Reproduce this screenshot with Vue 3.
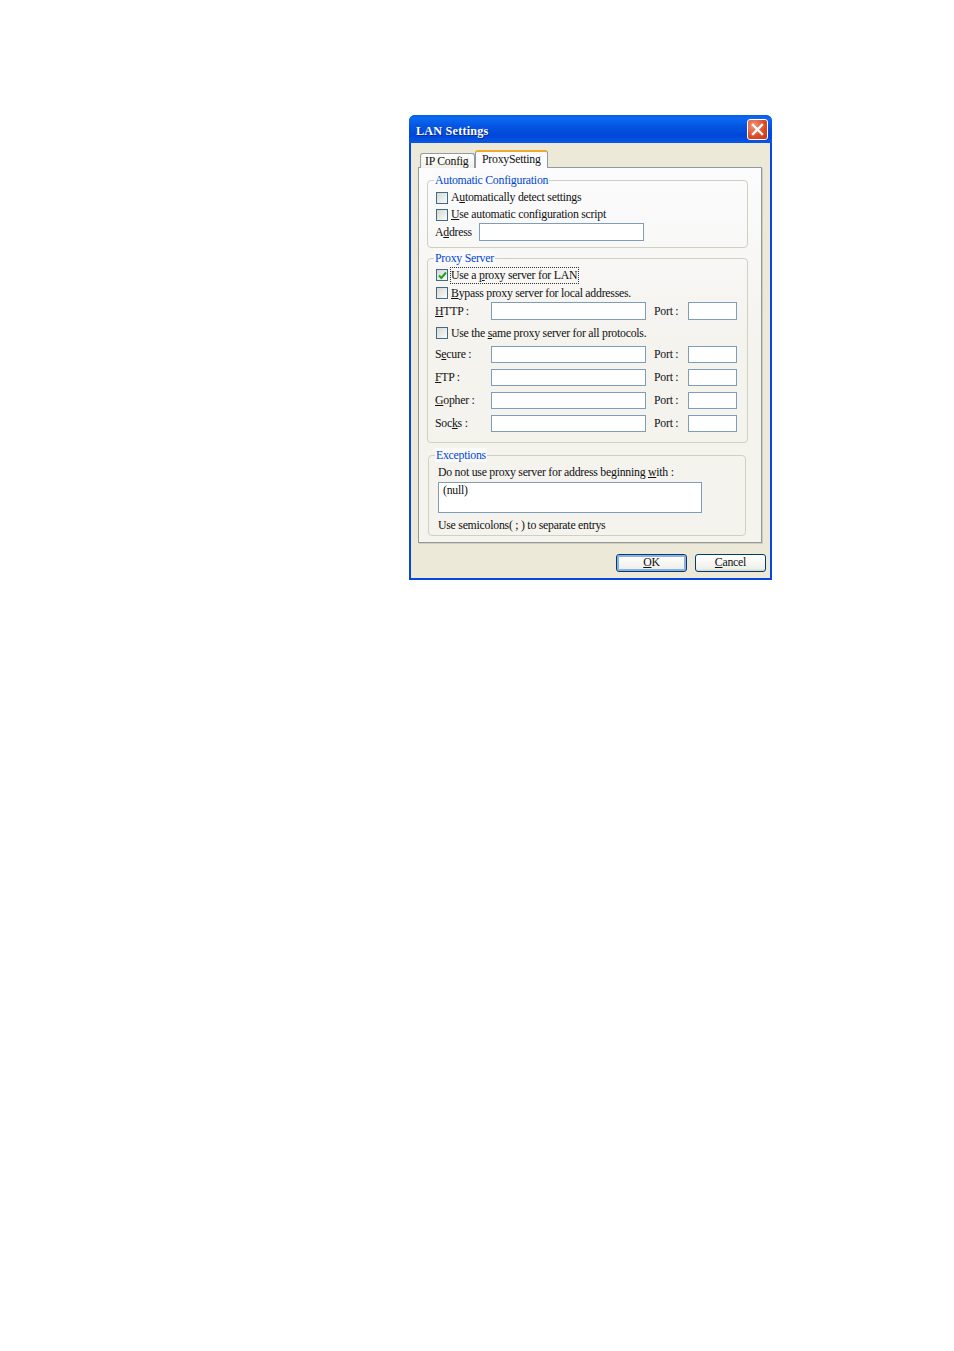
<template>
  <div class="page">
    <div class="window">
      <div class="titlebar">
        <span class="title">LAN Settings</span>
        <button class="close" type="button">
          <svg width="13" height="13" viewBox="0 0 13 13">
            <path d="M2 2 L11 11 M11 2 L2 11" stroke="#fff" stroke-width="2.4" stroke-linecap="square" />
          </svg>
        </button>
      </div>

      <div class="body">
        <div class="tabs">
          <div class="tab">IP Config</div>
          <div class="tab active">ProxySetting</div>
        </div>

        <div class="panel">
          <div class="group group-auto">
            <span class="legend">Automatic Configuration</span>
            <label class="row row-17"><i class="check"></i><span>A<u>u</u>tomatically detect settings</span></label>
            <label class="row row-17"><i class="check"></i><span><u>U</u>se automatic configuration script</span></label>
            <div class="row row-18 address">
              <span class="addr-label">A<u>d</u>dress</span>
              <span class="input addr-input"></span>
            </div>
          </div>

          <div class="group group-proxy">
            <span class="legend">Proxy Server</span>
            <label class="row row-18">
              <i class="check checked">
                <svg width="9" height="9" viewBox="0 0 9 9">
                  <path d="M1 4.5 L3.4 7 L8 1.5" fill="none" stroke="#21a121" stroke-width="2" />
                </svg>
              </i>
              <span class="focused">Use a <u>p</u>roxy server for LAN</span>
            </label>
            <label class="row row-18"><i class="check"></i><span><u>B</u>ypass proxy server for local addresses.</span></label>
            <div class="row server server-http">
              <span class="server-label"><u>H</u>TTP :</span>
              <span class="input host"></span>
              <span class="port-label">Port :</span>
              <span class="input port"></span>
            </div>
            <label class="row same"><i class="check"></i><span>Use the <u>s</u>ame proxy server for all protocols.</span></label>
            <div v-for="s in servers" :key="s.tail" class="row server">
              <span class="server-label">{{ s.head }}<u>{{ s.key }}</u>{{ s.tail }}</span>
              <span class="input host"></span>
              <span class="port-label">Port :</span>
              <span class="input port"></span>
            </div>
          </div>

          <div class="group group-exc">
            <span class="legend">Exceptions</span>
            <div class="exc-text">Do not use proxy server for address be<u>g</u>inning <u>w</u>ith :</div>
            <div class="input area">(null)</div>
            <div class="exc-note">Use semicolons( ; ) to separate entrys</div>
          </div>
        </div>

        <div class="buttons">
          <button class="btn default" type="button"><u>O</u>K</button>
          <button class="btn" type="button"><u>C</u>ancel</button>
        </div>
      </div>
    </div>
  </div>
</template>

<script setup>
const servers = [
  { head: 'S', key: 'e', tail: 'cure :' },
  { head: '', key: 'F', tail: 'TP :' },
  { head: '', key: 'G', tail: 'opher :' },
  { head: 'Soc', key: 'k', tail: 's :' }
]
</script>

<style>
html, body { background: #fff; }
</style>

<style scoped>
.page {
  height: 1351px;
  padding: 115px 0 0 409px;
  box-sizing: border-box;
  font-family: "Liberation Serif", "Times New Roman", serif;
  font-size: 11.8px;
  letter-spacing: -0.25px;
  color: #111;
}
.window {
  width: 363px;
  height: 465px;
  display: flex;
  flex-direction: column;
  background: #0a46dc;
  border-radius: 6px 6px 0 0;
  box-sizing: border-box;
  padding: 0 2px 2px;
}
.titlebar {
  height: 28px;
  margin: 0 -2px;
  padding: 0 4px 0 7px;
  display: flex;
  align-items: center;
  justify-content: space-between;
  border-radius: 6px 6px 0 0;
  background: linear-gradient(#0a5ce8 0%, #0a6af0 12%, #0554e2 40%, #0047d8 75%, #0a58e8 100%);
}
.title {
  color: #fff;
  font-weight: bold;
  font-size: 12.2px;
  letter-spacing: 0.2px;
  padding-top: 4px;
  text-shadow: 1px 1px 0 #0a2a90;
}
.close {
  width: 21px;
  height: 21px;
  padding: 0;
  display: flex;
  align-items: center;
  justify-content: center;
  background: radial-gradient(circle at 30% 30%, #f0937a, #db4a24 60%, #c23a14);
  border: 1px solid #fff;
  border-radius: 3px;
}
.body {
  flex: 1;
  background: #ece9d8;
  display: flex;
  flex-direction: column;
  padding: 0 7px;
}
.tabs {
  display: flex;
  align-items: flex-end;
  height: 25px;
  padding-left: 2px;
  position: relative;
  z-index: 1;
  margin-bottom: -1px;
}
.tab {
  height: 15px;
  width: 55px;
  box-sizing: border-box;
  padding: 0 0 0 4px;
  background: linear-gradient(#fff, #f1f0e8);
  border: 1px solid #919b9c;
  border-bottom: none;
  border-radius: 3px 3px 0 0;
  white-space: nowrap;
  overflow: hidden;
  line-height: 14px;
}
.tab.active {
  height: 18px;
  width: 73px;
  padding: 0 0 0 6px;
  background: #fcfcfe;
  border-top: 2px solid #f0a92f;
  line-height: 14px;
}
.panel {
  height: 376px;
  margin-right: 1px;
  box-sizing: border-box;
  border: 1px solid #919b9c;
  box-shadow: 1px 1px 0 #d0cdbd;
  background: linear-gradient(#fcfcfe, #f4f3ee 45%);
  padding: 12px 13px 0 8px;
}
.group {
  position: relative;
  border: 1px solid #d0d0bf;
  border-radius: 4px;
  box-sizing: border-box;
}
.legend {
  position: absolute;
  top: -8px;
  left: 6px;
  padding: 0 1px;
  line-height: 14px;
  color: #0046d5;
  background: #fafafa;
  white-space: nowrap;
}
.group-auto { height: 68px; padding: 8px 7px 0 8px; }
.group-proxy { height: 185px; margin-top: 10px; padding: 7px 7px 0 8px; }
.group-exc { height: 81px; margin: 12px 2px 0 1px; padding: 9px 9px 0; }
.row { display: flex; align-items: center; white-space: nowrap; }
.row-17 { height: 17px; }
.row-18 { height: 18px; }
.check {
  width: 12px;
  height: 12px;
  margin-right: 3px;
  flex: none;
  display: flex;
  align-items: center;
  justify-content: center;
  box-sizing: border-box;
  border: 1px solid #3f6a8e;
  background: linear-gradient(135deg, #d8d8d2, #fbfbf8);
}
.focused { outline: 1px dotted #333; outline-offset: 0; padding-right: 1px; }
.addr-label { width: 44px; margin-left: -1px; }
.input {
  display: block;
  box-sizing: border-box;
  border: 1px solid #7f9db9;
  background: #fff;
}
.addr-input { width: 165px; height: 18px; }
.server { height: 18px; margin-top: 5px; }
.server-http { margin-top: 0; }
.same { height: 18px; margin-top: 4px; }
.same + .server { margin-top: 3px; }
.server-label { width: 56px; margin-left: -1px; }
.host { width: 155px; height: 17px; }
.server-http .host, .server-http .port { height: 18px; }
.port-label { width: 34px; margin-left: 8px; }
.port { width: 49px; height: 17px; }
.exc-text { line-height: 14px; }
.area {
  width: 264px;
  height: 31px;
  margin-top: 3px;
  padding: 0 4px;
  line-height: 14px;
}
.exc-note { margin-top: 5px; line-height: 14px; }
.buttons {
  display: flex;
  justify-content: flex-end;
  gap: 8px;
  padding: 11px 0 0;
  margin-right: -3px;
}
.btn {
  width: 71px;
  height: 18px;
  padding: 0 0 2px;
  font: inherit;
  letter-spacing: inherit;
  color: #111;
  border: 1px solid #003c74;
  border-radius: 3px;
  background: linear-gradient(#fff, #f0f0ea 85%, #d8d5c8);
  line-height: 14px;
}
.btn.default { box-shadow: inset 0 0 0 2px #8fb0e4; }
</style>
